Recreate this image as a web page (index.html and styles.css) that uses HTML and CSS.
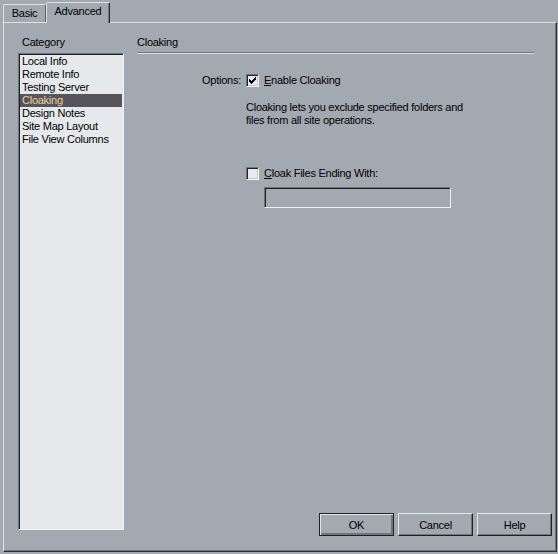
FILE: index.html
```html
<!DOCTYPE html>
<html lang="en">
<head>
    <meta charset="UTF-8">
    <title>Site Definition</title>
    <link rel="stylesheet" href="styles.css">
</head>
<body>

    <div class="dialog">
        <div class="tabs">
            <div class="tab">Basic</div>
            <div class="tab active">Advanced</div>
        </div>

        <div class="panel">
            <!-- category list on the left -->
            <div class="sidebar">
                <div class="caption">Category</div>
                <ul class="category-list">
                    <li>Local Info</li>
                    <li>Remote Info</li>
                    <li>Testing Server</li>
                    <li class="selected">Cloaking</li>
                    <li>Design Notes</li>
                    <li>Site Map Layout</li>
                    <li>File View Columns</li>
                </ul>
            </div>

            <div class="content">
                <div class="caption">Cloaking</div>
                <div class="rule"></div>

                <div class="options">
                    <div class="options-label">Options:</div>
                    <label class="check">
                        <span class="box">
                            <svg width="9" height="9" viewBox="0 0 9 9">
                                <path d="M1 3h1v3H1z M2 4h1v3H2z M3 5h1v3H3z M4 4h1v3H4z M5 3h1v3H5z M6 2h1v3H6z M7 1h1v3H7z" fill="#000"/>
                            </svg>
                        </span>
                        <span><u>E</u>nable Cloaking</span>
                    </label>

                    <p class="note">Cloaking lets you exclude specified folders and<br>files from all site operations.</p>

                    <label class="check files">
                        <span class="box"></span>
                        <span><u>C</u>loak Files Ending With:</span>
                    </label>

                    <div class="field"></div>
                </div>

                <div class="buttons">
                    <button class="default">OK</button>
                    <button>Cancel</button>
                    <button>Help</button>
                </div>
            </div>
        </div>
    </div>

</body>
</html>
```

FILE: styles.css
```css
body {
    margin: 0;
    font-family: "Liberation Sans", Arial, sans-serif;
    font-size: 11px;
    letter-spacing: -0.25px;
    color: #000;
}

.dialog {
    width: 558px;
    height: 554px;
    background-color: #a2a9b1;
    overflow: hidden;
}

/* tab strip */
.tabs {
    display: flex;
    align-items: flex-end;
    height: 22px;
    padding-left: 3px;
}

.tab {
    box-sizing: border-box;
    width: 43px;
    height: 18px;
    line-height: 17px;
    text-align: center;
    background-color: #a2a9b1;
    border-top: 1px solid #dde2e6;
    border-left: 1px solid #dde2e6;
    border-right: 1px solid #5a6066;
    border-radius: 2px 2px 0 0;
}

.tab.active {
    position: relative;
    z-index: 1;
    width: 64px;
    height: 21px;
    line-height: 17px;
    margin-bottom: -1px;
    border-right-color: #2c3034;
    box-shadow: inset -1px 0 0 #6e757c;
}

/* page body */
.panel {
    box-sizing: border-box;
    display: flex;
    width: 554px;
    height: 530px;
    margin-left: 3px;
    padding: 13px 0 15px 14px;
    border-top: 1px solid #dde2e6;
    border-left: 1px solid #dde2e6;
    border-right: 1px solid #2c3034;
    border-bottom: 1px solid #2c3034;
    box-shadow: inset -1px -1px 0 #6e757c;
}

.caption {
    line-height: 13px;
    padding-left: 4px;
}

.sidebar {
    display: flex;
    flex-direction: column;
    width: 106px;
    margin-bottom: 6px;
}

.sidebar .caption {
    margin-bottom: 4px;
}

.category-list {
    flex: 1;
    margin: 0;
    padding: 0;
    list-style: none;
    background-color: #e5e9eb;
    border: 1px solid;
    border-color: #6e757c #eef1f3 #eef1f3 #6e757c;
    box-shadow: inset 1px 1px 0 #1e2124;
    padding: 1px 1px 0 1px;
}

.category-list li {
    line-height: 13px;
    padding-left: 2px;
    white-space: nowrap;
}

.category-list li.selected {
    background-color: #57545b;
    color: #ead29c;
}

.content {
    display: flex;
    flex-direction: column;
    flex: 1;
    margin-left: 13px;
}

.content .caption {
    padding-left: 0;
}

.rule {
    height: 0;
    margin: 3px 22px 0 0;
    border-top: 1px solid #6e757c;
    border-bottom: 1px solid #dde2e6;
}

/* options block */
.options {
    display: grid;
    grid-template-columns: 109px 1fr;
    align-items: start;
    margin-top: 20px;
}

.options-label {
    line-height: 13px;
    text-align: right;
    padding-right: 5px;
}

.options > :not(.options-label) {
    grid-column: 2;
}

.check {
    display: flex;
    align-items: center;
    gap: 5px;
    line-height: 13px;
}

.check.files {
    margin-top: 40px;
}

.box {
    box-sizing: border-box;
    display: flex;
    align-items: center;
    justify-content: center;
    width: 13px;
    height: 13px;
    background-color: #e8ebed;
    border: 1px solid;
    border-color: #6e757c #f2f4f5 #f2f4f5 #6e757c;
    box-shadow: inset 1px 1px 0 #1e2124, inset -1px -1px 0 #c4c9ce;
}

.note {
    margin: 14px 0 0 0;
    line-height: 13px;
}

.field {
    box-sizing: border-box;
    width: 187px;
    height: 21px;
    margin: 7px 0 0 18px;
    border: 1px solid;
    border-color: #6e757c #eef1f3 #eef1f3 #6e757c;
    box-shadow: inset 1px 1px 0 #1e2124;
}

/* dialog buttons */
.buttons {
    display: flex;
    justify-content: flex-end;
    gap: 4px;
    margin-top: auto;
    margin-right: 4px;
}

.buttons button {
    box-sizing: border-box;
    width: 75px;
    height: 23px;
    padding: 0;
    font-family: inherit;
    font-size: 11px;
    letter-spacing: inherit;
    color: #000;
    background-color: #a2a9b1;
    border: 1px solid;
    border-color: #e3e7ea #1e2124 #1e2124 #e3e7ea;
    box-shadow: inset -1px -1px 0 #6e757c;
}

.buttons button.default {
    border-color: #1e2124;
    box-shadow: inset 1px 1px 0 #e3e7ea, inset -2px -2px 0 #6e757c;
}
```
